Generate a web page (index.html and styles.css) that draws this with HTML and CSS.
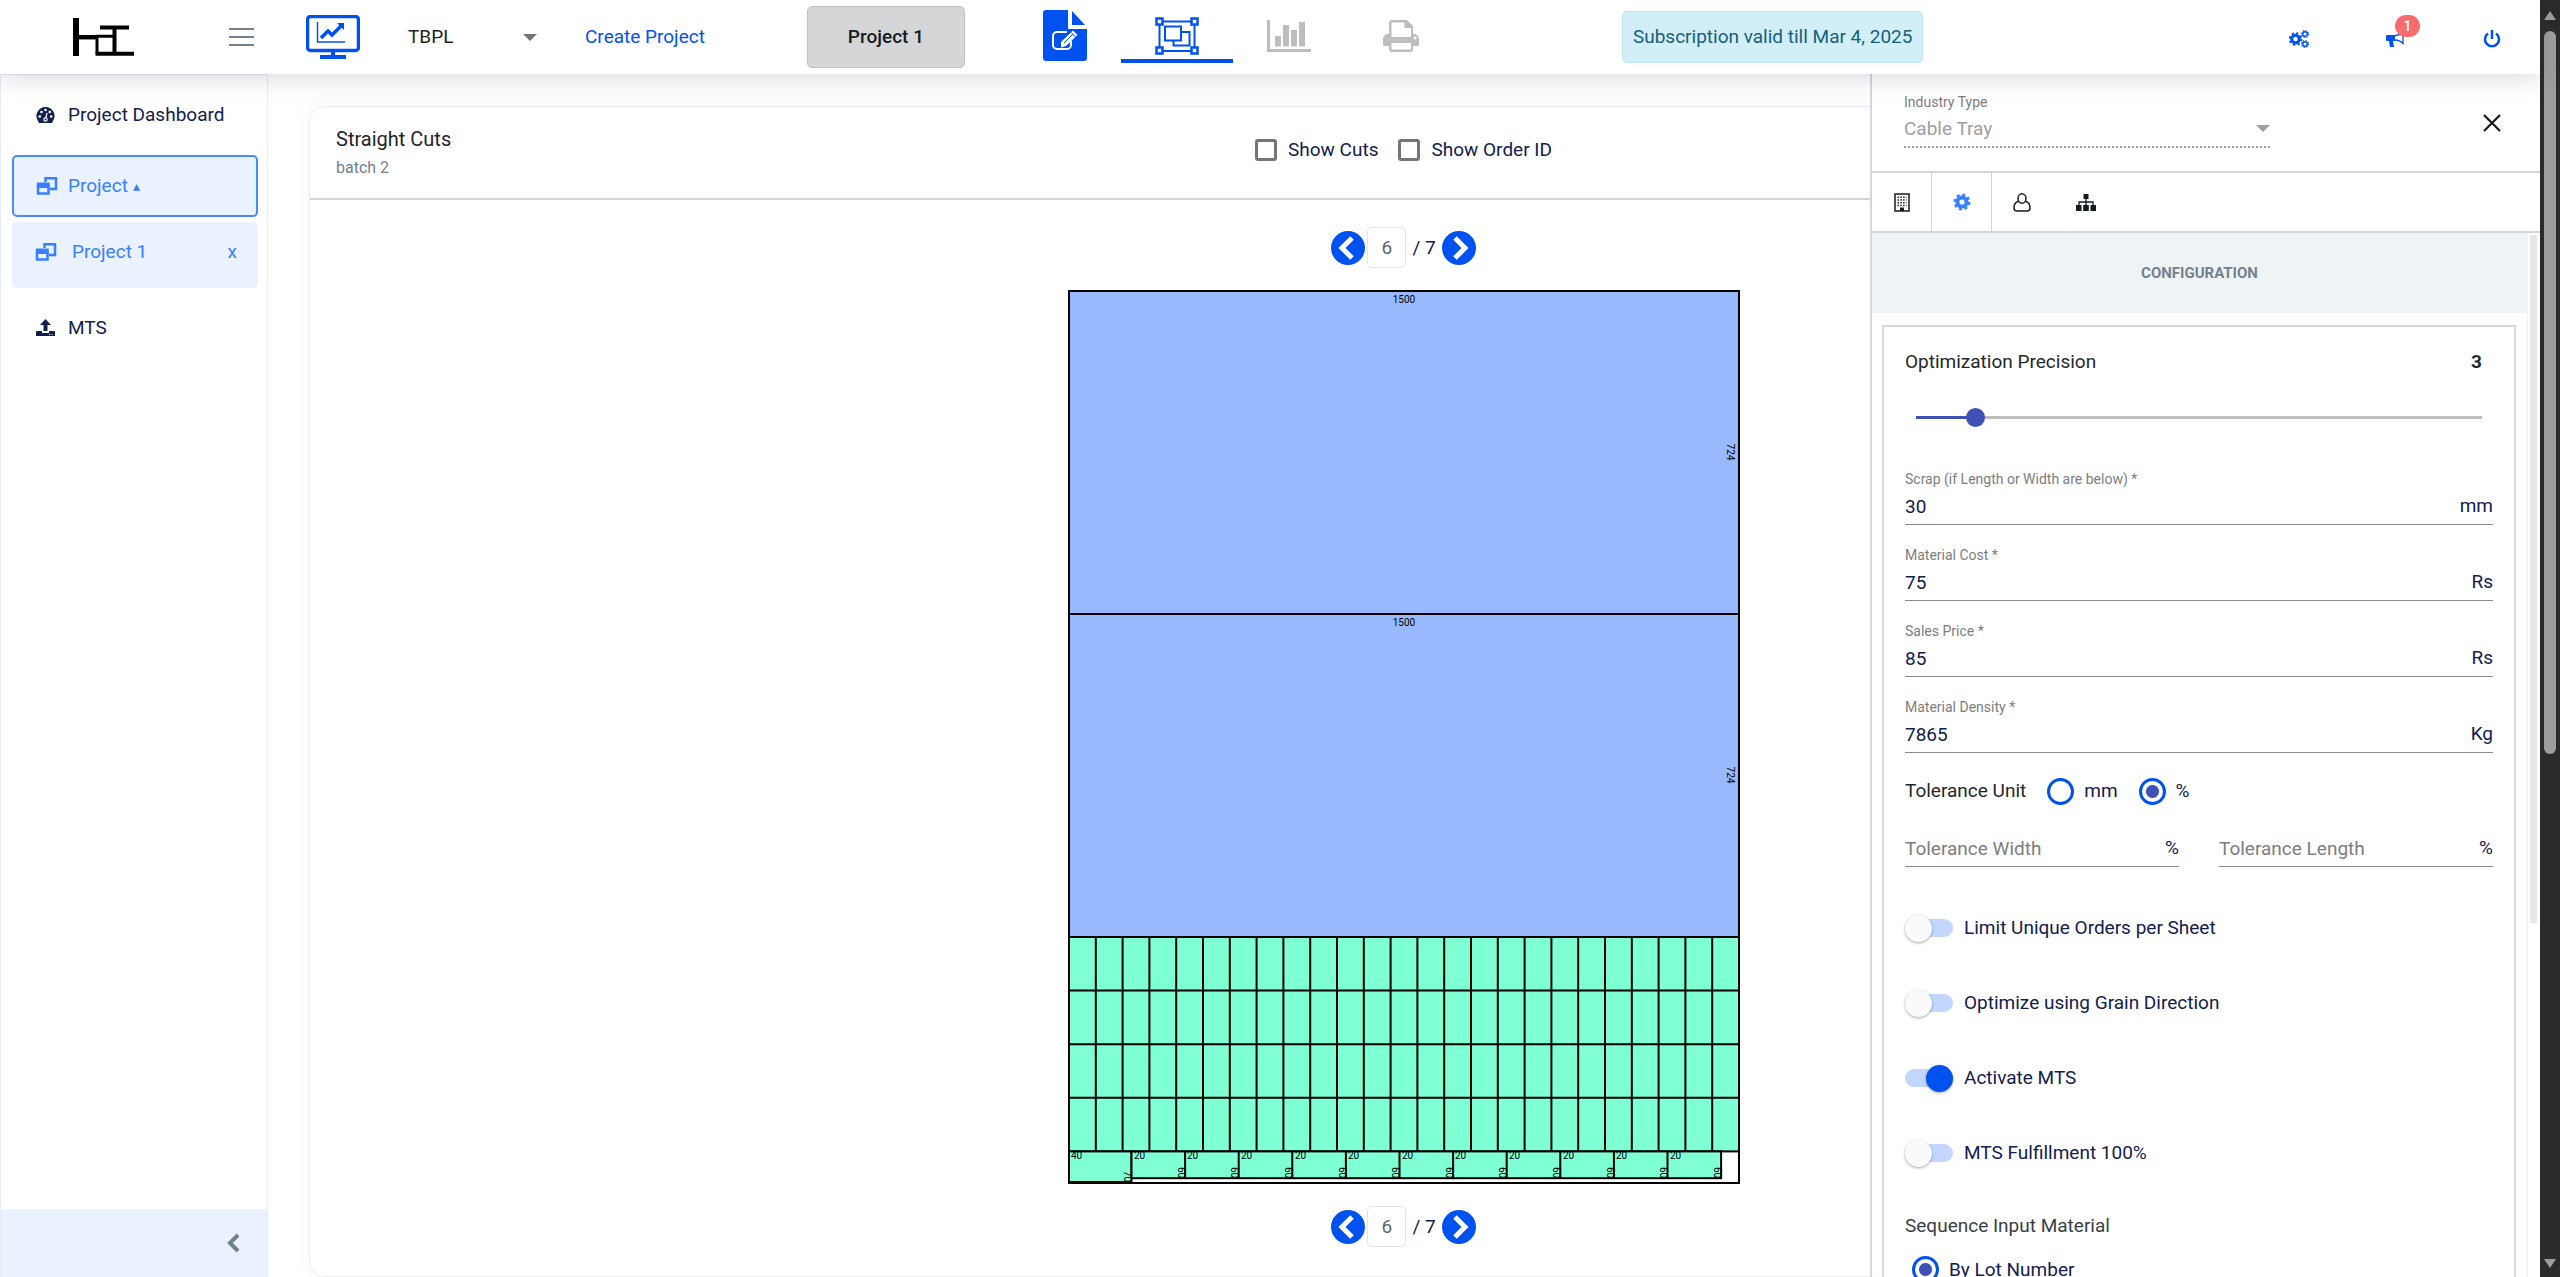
FILE: index.html
```html
<!DOCTYPE html>
<html lang="en">
<head>
<meta charset="utf-8">
<title>Project 1 - Straight Cuts</title>
<link rel="stylesheet" href="styles.css">
</head>
<body>
<div class="app">
  <header class="topbar">
    <svg class="logo" width="62" height="38" viewBox="0 0 62 38" fill="none" stroke="#000"><path stroke-width="6" d="M3 0v38"/><path stroke-width="4.500" d="M5 19.200h18"/><path stroke-width="3" d="M24 17.500v18M23 18.200h18"/><path stroke-width="4" d="M27 9.500h29M41.500 9.500v26M22.500 35.800H61"/></svg>
    <button class="icon-btn menu-btn" aria-label="Toggle menu"><svg width="25" height="20" viewBox="0 0 25 20" stroke="#73818f" stroke-width="2"><path d="M0 2h25M0 10h25M0 18h25"/></svg></button>
    <a class="monitor" href="#" aria-label="Dashboard"><svg width="54" height="44" viewBox="0 0 54 44" fill="none" stroke="#0052f0"><rect x="1.500" y="1.500" width="51" height="34" rx="3" stroke-width="3.500"/><path stroke-width="4" d="M27 36v5M14 42h26"/><path stroke-width="1.500" d="M11.500 7v20H39"/><path stroke-width="3.500" d="M15 23l7-7 4 4 9-9"/><path fill="#0052f0" stroke="none" d="M31 8h7v7z"/></svg></a>
    <div class="select-wrap company"><select aria-label="Company"><option>TBPL</option></select></div>
    <a class="create" href="#">Create Project</a>
    <button class="project-btn">Project 1</button>
    <nav class="steps" aria-label="Steps">
      <a href="#" aria-label="Edit"><svg width="44" height="52" viewBox="0 0 44 52"><path fill="#0052f0" d="M3 0h22v19h19v29a3 3 0 0 1-3 3H3a3 3 0 0 1-3-3V3a3 3 0 0 1 3-3zM29 1l13 14H29z"/><g fill="none" stroke="#fff" stroke-width="2"><path d="M24 22H14a4 4 0 0 0-4 4v9a4 4 0 0 0 4 4h10a4 4 0 0 0 4-4v-4"/></g><path fill="#fff" d="M18 32L30 20.500l4.500 4.500L23 36l-5 1.500z"/><path stroke="#0052f0" d="M21 33l9-9M28 22.500l4.500 4.500"/></svg></a>
      <a class="active" href="#" aria-label="Layout"><svg width="44" height="38" viewBox="0 0 44 38" fill="none" stroke="#0052f0" stroke-width="2"><path d="M8 4.500h28M8 34h28M4.500 8v22M39.500 8v22"/><path stroke-width="2.500" d="M1.500 1.500h6v6h-6zM36.500 1.500h6v6h-6zM1.500 30.500h6v6h-6zM36.500 30.500h6v6h-6z"/><path d="M10 9.500h16v14H10zM27 15h7.500v13.500H18.500v-5"/></svg></a>
      <a href="#" aria-label="Charts"><svg width="44" height="32" viewBox="0 0 44 32" fill="#bdbdbd"><path d="M0 0h3v29h41v3H0zM8 16h6v10.500H8zM16 5h6v21.500h-6zM24 10h6v16.500h-6zM32 2h6v24.500h-6z"/></svg></a>
      <a href="#" aria-label="Print"><svg width="36" height="32" viewBox="0 0 36 32"><path fill="#bdbdbd" d="M6 14V3a3 3 0 0 1 3-3h15l6 6v8h1a5 5 0 0 1 5 5v6a1 1 0 0 1-1 1h-5v3a3 3 0 0 1-3 3H9a3 3 0 0 1-3-3v-3H1a1 1 0 0 1-1-1v-6a5 5 0 0 1 5-5z"/><path fill="#fff" d="M8.500 2.500h13V8H28v9H8.500zM8.500 23H28v6.500H8.500z"/><circle cx="32" cy="18" r="1.500" fill="#fff"/></svg></a>
    </nav>
    <p class="subscription">Subscription valid till Mar 4, 2025</p>
    <div class="actions">
      <button class="icon-btn" aria-label="Settings"><svg width="20" height="18" viewBox="0 0 20 18" fill="none" stroke="#0052f0"><circle cx="6.500" cy="9" r="3.800" stroke-width="3"/><circle cx="6.500" cy="9" r="5.800" stroke-width="2" stroke-dasharray="2.300 2.255"/><circle cx="16" cy="4" r="2.300" stroke-width="1.500"/><circle cx="16" cy="4" r="3.400" stroke-width="1.300" stroke-dasharray="1.300 1.370"/><circle cx="16" cy="14" r="2.300" stroke-width="1.500"/><circle cx="16" cy="14" r="3.400" stroke-width="1.300" stroke-dasharray="1.300 1.370"/></svg></button>
      <button class="icon-btn bell" aria-label="Announcements"><svg width="20" height="18" viewBox="0 0 20 18"><path fill="#0052f0" d="M1 5h8v6H7l1 6H4L3 11H1a1 1 0 0 1-1-1V6a1 1 0 0 1 1-1z"/><path fill="none" stroke="#0052f0" stroke-width="1.300" d="M9 5.500c3 0 6-1.500 8-4v12c-2-2-5-3.500-8-3.500"/></svg><span class="badge">1</span></button>
      <button class="icon-btn" aria-label="Log out"><svg width="18" height="18" viewBox="0 0 18 18" fill="none" stroke="#0052f0" stroke-width="2.500"><path d="M5 3.500a7 7 0 1 0 8 0"/><path d="M9 0v9"/></svg></button>
    </div>
  </header>

  <aside class="sidebar">
    <nav class="side-nav" aria-label="Main">
      <a class="side-item" href="#"><svg width="22" height="18" viewBox="0 0 22 18"><path fill="#12204d" d="M9.500 1A9 9 0 0 1 17 15l-1 2H3l-1-2A9 9 0 0 1 9.500 1z"/><g fill="#fff"><circle cx="9.500" cy="4" r="1.300"/><circle cx="5.500" cy="6" r="1.300"/><circle cx="3.800" cy="10.500" r="1.300"/><circle cx="15.200" cy="10.500" r="1.300"/><circle cx="13.800" cy="6" r="1.300"/><circle cx="9.500" cy="13.500" r="2.200"/></g><path stroke="#fff" stroke-width="1.300" d="M9.500 13l1.500-6"/><circle cx="9.500" cy="13.500" r="1.100" fill="#12204d"/></svg>Project Dashboard</a>
      <div class="side-group">
        <a class="side-item current" href="#"><svg width="22" height="20" viewBox="0 0 22 20"><path fill="none" stroke="#3880ff" stroke-width="2.500" d="M9.500 6V2.200h10.500V13H14M2 10v7.500h10.500V10"/><path fill="#3880ff" d="M.8 6.500h13v5.500H.8z"/></svg><span>Project <small>▴</small></span></a>
        <div class="side-item child"><svg width="22" height="20" viewBox="0 0 22 20"><path fill="none" stroke="#3880ff" stroke-width="2.500" d="M9.500 6V2.200h10.500V13H14M2 10v7.500h10.500V10"/><path fill="#3880ff" d="M.8 6.500h13v5.500H.8z"/></svg><a href="#">Project 1</a><button class="close-tab" aria-label="Close Project 1">x</button></div>
      </div>
      <a class="side-item" href="#"><svg width="22" height="18" viewBox="0 0 22 18" fill="#12204d"><path d="M9.500 0L15 6h-3.500v6h-4V6H4z"/><path d="M1 12h5v2h7v-2h5a1 1 0 0 1 1 1v4H0v-4a1 1 0 0 1 1-1z"/><path fill="#fff" d="M13 15h1v1h-1zM15.500 15h1v1h-1z"/></svg>MTS</a>
    </nav>
    <button class="collapse" aria-label="Collapse sidebar"><svg width="14" height="20" viewBox="0 0 14 20" fill="none" stroke="#73818f" stroke-width="4"><path d="M12 2L4 10l8 8"/></svg></button>
  </aside>

  <main class="content">
    <section class="card">
      <div class="card-head">
        <div>
          <h1>Straight Cuts</h1>
          <p class="batch">batch 2</p>
        </div>
        <div class="checks">
          <label><input type="checkbox">Show Cuts</label>
          <label><input type="checkbox">Show Order ID</label>
        </div>
      </div>
      <div class="sheet-area">
        <div class="pager">
          <button class="round" aria-label="Previous sheet"><svg width="34" height="34" viewBox="0 0 34 34" fill="none" stroke="#fff" stroke-width="5"><path d="M21 7L11 17l10 10"/></svg></button>
          <input type="text" value="6" aria-label="Sheet number"><span>/ 7</span>
          <button class="round" aria-label="Next sheet"><svg width="34" height="34" viewBox="0 0 34 34" fill="none" stroke="#fff" stroke-width="5"><path d="M13 7l10 10-10 10"/></svg></button>
        </div>
        <svg class="sheet" width="672" height="894" viewBox="-1 0 672 894">
          <!-- parts -->
          <g stroke="#000" stroke-width="2">
            <rect x="0" y="1" width="670" height="892" fill="#fff"/>
            <rect x="0" y="1" width="670" height="323" fill="#99b9ff"/>
            <rect x="0" y="324" width="670" height="323" fill="#99b9ff"/>
            <rect x="0" y="647" width="670" height="214.400" fill="#7fffd4"/>
            <path fill="none" d="M0 700.600h670M0 754.200h670M0 807.800h670M26.800 647v214.400m26.800 0v-214.400m26.800 0v214.400m26.800 0v-214.400m26.800 0v214.400m26.800 0v-214.400m26.800 0v214.400m26.800 0v-214.400m26.800 0v214.400m26.800 0v-214.400m26.800 0v214.400m26.800 0v-214.400m26.800 0v214.400m26.800 0v-214.400m26.800 0v214.400m26.800 0v-214.400m26.800 0v214.400m26.800 0v-214.400m26.800 0v214.400m26.800 0v-214.400m26.800 0v214.400m26.800 0v-214.400m26.800 0v214.400m26.800 0v-214.400"/>
            <rect x="0" y="861.400" width="62.500" height="30.600" fill="#7fffd4"/>
            <rect x="62.500" y="861.400" width="589.600" height="26.800" fill="#7fffd4"/>
            <path fill="none" d="M116.100 861.400v26.800m53.600 0v-26.800m53.600 0v26.800m53.600 0v-26.800m53.600 0v26.800m53.600 0v-26.800m53.600 0v26.800m53.600 0v-26.800m53.600 0v26.800m53.600 0v-26.800"/>
          </g>
          <g class="dims">
            <text x="335" y="13" text-anchor="middle">1500</text>
            <text x="335" y="336" text-anchor="middle">1500</text>
            <text transform="translate(658 162) rotate(90)" text-anchor="middle">724</text>
            <text transform="translate(658 485) rotate(90)" text-anchor="middle">724</text>
            <text x="2" y="869">40</text><text transform="translate(55 881) rotate(90)">70</text>
            <text x="65" y="869">20</text><text x="118" y="869">20</text><text x="172" y="869">20</text><text x="226" y="869">20</text><text x="279" y="869">20</text><text x="333" y="869">20</text><text x="386" y="869">20</text><text x="440" y="869">20</text><text x="494" y="869">20</text><text x="547" y="869">20</text><text x="601" y="869">20</text>
            <text transform="translate(109 877) rotate(90)">60</text><text transform="translate(162 877) rotate(90)">60</text><text transform="translate(216 877) rotate(90)">60</text><text transform="translate(270 877) rotate(90)">60</text><text transform="translate(323 877) rotate(90)">60</text><text transform="translate(377 877) rotate(90)">60</text><text transform="translate(430 877) rotate(90)">60</text><text transform="translate(484 877) rotate(90)">60</text><text transform="translate(538 877) rotate(90)">60</text><text transform="translate(591 877) rotate(90)">60</text><text transform="translate(645 877) rotate(90)">60</text>
          </g>
        </svg>
        <div class="pager">
          <button class="round" aria-label="Previous sheet"><svg width="34" height="34" viewBox="0 0 34 34" fill="none" stroke="#fff" stroke-width="5"><path d="M21 7L11 17l10 10"/></svg></button>
          <input type="text" value="6" aria-label="Sheet number"><span>/ 7</span>
          <button class="round" aria-label="Next sheet"><svg width="34" height="34" viewBox="0 0 34 34" fill="none" stroke="#fff" stroke-width="5"><path d="M13 7l10 10-10 10"/></svg></button>
        </div>
      </div>
    </section>

    <aside class="panel">
      <div class="panel-head">
        <div class="industry">
          <label for="industry">Industry Type</label>
          <div class="select-wrap"><select id="industry" disabled><option>Cable Tray</option></select></div>
        </div>
        <button class="icon-btn" aria-label="Close panel"><svg width="18" height="18" viewBox="0 0 18 18" stroke="#151b1e" stroke-width="2.200"><path d="M1 1l16 16M17 1L1 17"/></svg></button>
      </div>
      <div class="tabs">
        <button class="tab" aria-label="Company"><svg width="16" height="19" viewBox="0 0 16 19" fill="none" stroke="#151b1e" stroke-width="1.500"><path d="M1 1h14v17H1z"/><path stroke-dasharray="1.500 1.300" d="M3.500 4.200h9M3.500 7h9M3.500 9.800h9M3.500 12.600h9"/><path fill="#151b1e" stroke="none" d="M6 14.500h4V18H6z"/></svg></button>
        <button class="tab selected" aria-label="Configuration"><svg width="18" height="18" viewBox="0 0 18 18" fill="none" stroke="#3880ff"><circle cx="9" cy="9" r="4.600" stroke-width="4"/><circle cx="9" cy="9" r="7.200" stroke-width="2.600" stroke-dasharray="3 2.655"/></svg></button>
        <button class="tab" aria-label="Customer"><svg width="18" height="19" viewBox="0 0 18 19" fill="none" stroke="#151b1e" stroke-width="1.500"><ellipse cx="9" cy="5.500" rx="4" ry="4.700"/><path d="M5.500 8.500C2 9 1 12 1 15c0 2 1 3 3 3h10c2 0 3-1 3-3 0-3-1-6-4.500-6.500"/></svg></button>
        <button class="tab" aria-label="Hierarchy"><svg width="20" height="17" viewBox="0 0 20 17" fill="#151b1e"><path d="M7.500 0h5v5h-5zM0 11h5.500v6H0zM7.200 11h5.600v6H7.200zM14.500 11H20v6h-5.500z"/><path fill="none" stroke="#151b1e" stroke-width="1.300" d="M10 5v6M3 11V8h14v3"/></svg></button>
      </div>
      <div class="panel-body">
        <form class="config">
          <h2>CONFIGURATION</h2>
          <div class="config-box">
            <div class="precision"><label for="precision">Optimization Precision</label><output for="precision">3</output></div>
            <input class="slider" id="precision" type="range" min="1" max="23" value="3">
            <div class="field"><label for="scrap">Scrap (if Length or Width are below) *</label><div class="line"><input id="scrap" type="text" value="30"><span>mm</span></div></div>
            <div class="field"><label for="cost">Material Cost *</label><div class="line"><input id="cost" type="text" value="75"><span>Rs</span></div></div>
            <div class="field"><label for="price">Sales Price *</label><div class="line"><input id="price" type="text" value="85"><span>Rs</span></div></div>
            <div class="field"><label for="density">Material Density *</label><div class="line"><input id="density" type="text" value="7865"><span>Kg</span></div></div>
            <div class="unit"><span>Tolerance Unit</span><label><input type="radio" name="unit">mm</label><label><input type="radio" name="unit" checked>%</label></div>
            <div class="pair">
              <div class="line"><input type="text" placeholder="Tolerance Width" aria-label="Tolerance Width"><span>%</span></div>
              <div class="line"><input type="text" placeholder="Tolerance Length" aria-label="Tolerance Length"><span>%</span></div>
            </div>
            <div class="toggles">
              <label><input type="checkbox">Limit Unique Orders per Sheet</label>
              <label><input type="checkbox">Optimize using Grain Direction</label>
              <label><input type="checkbox" checked>Activate MTS</label>
              <label><input type="checkbox">MTS Fulfillment 100%</label>
            </div>
            <p class="sequence">Sequence Input Material</p>
            <label class="lot"><input type="radio" name="sequence" checked>By Lot Number</label>
          </div>
        </form>
        <div class="inner-scroll"><div></div></div>
      </div>
    </aside>
  </main>
</div>
<div class="page-scroll">
  <i class="up"></i><div class="thumb"></div><i class="down"></i>
</div>
</body>
</html>
```

FILE: styles.css
```css
* { box-sizing: border-box; }

body {
  margin: 0;
  display: flex;
  height: 100vh;
  overflow: hidden;
  background: #fff;
  color: #12204d;
  font: 19px/24px Roboto, sans-serif;
}

h1, h2, p { margin: 0; font-weight: 400; }
a { color: inherit; text-decoration: none; }
svg { display: block; flex: none; }
button, input, select { font: inherit; color: inherit; }
button { padding: 0; border: 0; background: none; }
input[type="text"] { min-width: 0; border: 0; padding: 0; background: none; outline: 0; }

.app {
  flex: 1;
  min-width: 0;
  display: grid;
  grid-template: 74px 1fr / 268px 1fr;
}

/* top bar */
.topbar {
  grid-column: 1 / -1;
  z-index: 2;
  display: flex;
  align-items: center;
  padding: 0 39px 0 73px;
  background: #fff;
  box-shadow: 0 4px 24px rgba(40, 50, 70, .18);
}
.icon-btn { display: flex; align-items: center; justify-content: center; }
.menu-btn { margin-left: 94px; }
.monitor { margin-left: 52px; }
.select-wrap { display: flex; align-items: center; }
.select-wrap select {
  flex: 1;
  appearance: none;
  border: 0;
  padding: 0;
  background: none;
  opacity: 1;
}
.select-wrap::after {
  content: "";
  border: 7px solid transparent;
  border-top-color: #757575;
  border-bottom: 0;
}
.company { width: 129px; margin-left: 48px; color: #212529; }
.create { margin-left: 48px; color: #0052f0; }
.project-btn {
  width: 158px;
  height: 62px;
  margin-left: 102px;
  border: 1px solid #bfc1c3;
  border-radius: 5px;
  background: #d5d6d8;
  color: #181b1e;
  font-weight: 500;
}
.steps { display: flex; align-self: stretch; margin-left: 44px; }
.steps a {
  width: 112px;
  margin-bottom: 11px;
  padding-top: 13px;
  display: flex;
  align-items: center;
  justify-content: center;
  border-bottom: 4px solid transparent;
}
.steps .active { border-color: #0052f0; }
.subscription {
  margin-left: 165px;
  padding: 13px 10px;
  border: 1px solid #bee5f0;
  border-radius: 5px;
  background: #d2eef7;
  color: #14617b;
}
.actions { display: flex; align-items: center; gap: 77px; margin: 3px 0 0 auto; }
.bell { position: relative; }
.badge {
  position: absolute;
  left: 9px;
  top: -15px;
  width: 25px;
  height: 22px;
  border-radius: 11px;
  background: #fa6b6b;
  color: #fff;
  font-size: 14px;
  font-weight: 500;
  line-height: 22px;
}

/* left navigation */
.sidebar {
  display: flex;
  flex-direction: column;
  min-height: 0;
  border: 1px solid #e9e9f6;
  border-bottom: 0;
}
.side-nav { flex: 1; display: flex; flex-direction: column; gap: 9px; padding: 9px 9px 0 11px; }
.side-group { display: flex; flex-direction: column; gap: 5px; }
.side-item {
  display: flex;
  align-items: center;
  gap: 10px;
  height: 62px;
  padding: 0 22px;
  border: 2px solid transparent;
  border-radius: 5px;
}
.current { border-color: #4a8aff; background: #eaf1ff; color: #3880ff; }
.current small { font-size: 14px; line-height: 12px; vertical-align: 1px; }
.child { gap: 15px; height: 66px; padding: 0 19px 6px 21px; background: #eaf1ff; color: #3880ff; }
.close-tab { margin-left: auto; }
.collapse {
  display: flex;
  align-items: center;
  justify-content: flex-end;
  height: 68px;
  padding-right: 27px;
  background: #eaf1ff;
}

/* cutting sheet */
.content { position: relative; min-width: 0; min-height: 0; padding: 32px 42px 0 41px; display: flex; }
.card {
  flex: 1;
  border: 1px solid #ebebf8;
  border-radius: 16px;
  box-shadow: 0 0 24px rgba(40, 50, 90, .04);
}
.card-head {
  display: grid;
  grid-template-columns: 1fr auto 1fr;
  align-items: center;
  height: 93px;
  padding: 0 26px;
  border-bottom: 2px solid #cfd6dc;
}
h1 { color: #212529; font-size: 20px; line-height: 30px; }
.batch { color: #73818f; font-size: 16px; line-height: 28px; }
.checks { display: flex; gap: 20px; margin-bottom: 6px; }
.checks label { display: flex; align-items: center; gap: 11px; }
.checks input {
  appearance: none;
  width: 22px;
  height: 22px;
  margin: 0;
  border: 3px solid #757575;
  border-radius: 3px;
}
.sheet-area { display: flex; flex-direction: column; align-items: center; gap: 22px; padding-top: 27px; }
.pager { display: flex; align-items: center; gap: 2px; }
.round { border-radius: 50%; background: #0052f0; }
.pager input {
  width: 39px;
  height: 41px;
  border: 1px solid #e1e4e8;
  border-radius: 5px;
  color: #5c6873;
  text-align: center;
}
.pager span { padding: 0 4px; }
.dims { fill: #000; font-size: 10px; }

/* settings panel, laid over the sheet */
.panel {
  position: absolute;
  inset: 0 0 0 auto;
  width: 670px;
  display: flex;
  flex-direction: column;
  border-left: 2px solid #d1d8de;
  background: #fff;
}
.panel-head {
  display: flex;
  align-items: center;
  justify-content: space-between;
  height: 99px;
  padding: 0 39px 0 32px;
  border-bottom: 2px solid #cfd6dc;
}
.industry { width: 366px; margin-bottom: 6px; border-bottom: 2px dotted #9a9a9a; }
.industry label { display: block; color: #7d7d7d; font-size: 14px; line-height: 20px; }
.industry .select-wrap { height: 34px; color: #9e9e9e; }
.industry .select-wrap::after { border-top-color: #9e9e9e; }
.tabs { display: flex; height: 60px; border-bottom: 2px solid #cfd6dc; }
.tab { width: 60px; display: flex; align-items: center; justify-content: center; }
.tab:nth-child(-n+2) { border-right: 1px solid #cfd6dc; }
.tab:nth-child(4) { width: 68px; }
.panel-body { flex: 1; min-height: 0; display: flex; overflow: hidden; }
.config { flex: 1; min-width: 0; }
h2 {
  background: #eff3f6;
  color: #73818f;
  font-size: 15px;
  font-weight: 700;
  line-height: 80px;
  text-align: center;
}
.config-box { margin: 12px 11px 0 10px; padding: 23px 21px 22px; border: 2px solid #d1d8de; }
.precision { display: flex; justify-content: space-between; padding-right: 11px; color: #23282c; }
.precision output { font-weight: 700; }
.slider {
  appearance: none;
  display: block;
  width: 566px;
  height: 20px;
  margin: 33px 11px 42px;
  background: linear-gradient(#3f51b5, #3f51b5) 0 50% / 60px 3px no-repeat,
    linear-gradient(#bdbdbd, #bdbdbd) 0 50% / 100% 3px no-repeat;
}
.slider::-webkit-slider-thumb {
  appearance: none;
  width: 19px;
  height: 19px;
  border-radius: 50%;
  background: #3f51b5;
}
.field { height: 76px; }
.field label { display: block; color: #7d7d7d; font-size: 14px; line-height: 20px; }
.line { display: flex; height: 36px; border-bottom: 1px solid #8a8a8a; }
.line input { flex: 1; }
.line span { line-height: 34px; }
.line input::placeholder { color: #7d7d7d; opacity: 1; }
.unit { display: flex; align-items: center; gap: 21px; height: 28px; margin-top: 4px; color: #23282c; }
.unit label, .lot { display: flex; align-items: center; gap: 10px; color: #12204d; }
input[type="radio"] {
  appearance: none;
  width: 27px;
  height: 27px;
  margin: 0;
  border: 3px solid #0052f0;
  border-radius: 50%;
}
input[type="radio"]:checked { background: radial-gradient(circle, #3f51b5 6px, transparent 7px); }
.pair { display: grid; grid-template-columns: 1fr 1fr; gap: 40px; margin-top: 26px; }
.toggles { display: flex; flex-direction: column; gap: 47px; margin-top: 47px; }
.toggles label { display: flex; align-items: center; gap: 11px; height: 28px; }
.toggles input {
  appearance: none;
  display: flex;
  align-items: center;
  width: 48px;
  height: 18px;
  margin: 0;
  border-radius: 9px;
  background: #c2d6ff;
}
.toggles input::before {
  content: "";
  width: 27px;
  height: 27px;
  flex: none;
  border-radius: 50%;
  background: #fafafa;
  box-shadow: 0 1px 3px rgba(0, 0, 0, .35);
}
.toggles input:checked { justify-content: flex-end; }
.toggles input:checked::before { background: #0052f0; }
.sequence { margin-top: 47px; color: #3a3f45; }
.lot { margin: 18px 0 24px 7px; }
.inner-scroll { width: 13px; padding: 2px 3px 0 2px; border-left: 1px solid #f0f0f0; }
.inner-scroll div { height: 66%; background: #e6e6e6; }

/* page scrollbar */
.page-scroll {
  width: 20px;
  display: flex;
  flex-direction: column;
  align-items: center;
  padding: 11px 0 9px;
  background: #2b2b2b;
}
.up, .down { border: 0 solid transparent; border-width: 0 6px; }
.up { border-bottom: 9px solid #9e9e9e; }
.down { margin-top: auto; border-top: 9px solid #9e9e9e; }
.thumb { width: 12px; height: 57.5%; margin-top: 11px; border-radius: 6px; background: #9e9e9e; }
```
